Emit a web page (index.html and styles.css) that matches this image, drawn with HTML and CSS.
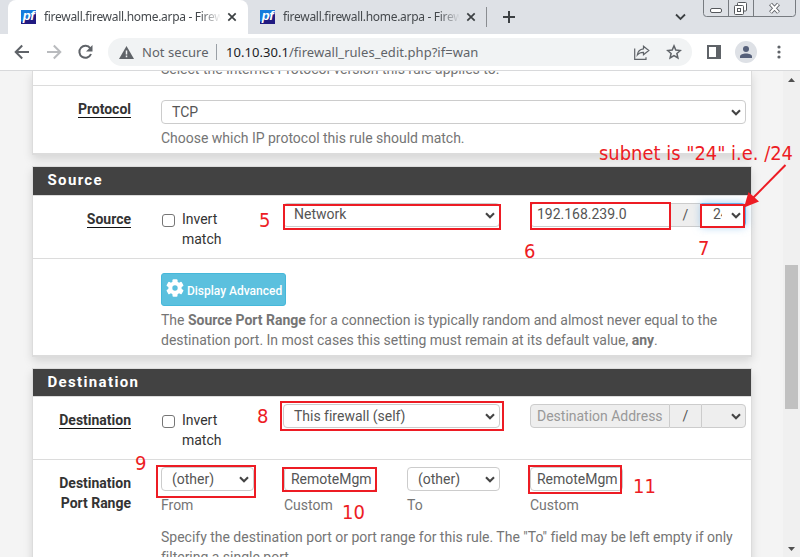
FILE: index.html
```html
<!DOCTYPE html>
<html lang="en">
<head>
<meta charset="utf-8">
<title>firewall.firewall.home.arpa - Firewall: Rules: Edit</title>
<link rel="stylesheet" href="styles.css">
</head>
<body>
<svg class="defs" width="0" height="0">
  <defs>
    <symbol id="close" viewBox="0 0 10 10"><path d="M1.3 1.3l7.4 7.4M8.7 1.3L1.3 8.7" stroke="#3c4043" stroke-width="1.7" fill="none"/></symbol>
    <symbol id="chev" viewBox="0 0 10 7"><path d="M1 1.2l4 4 4-4" stroke="currentColor" stroke-width="2.1" fill="none"/></symbol>
  </defs>
</svg>
<div class="browser">
  <header class="tabs">
    <div class="tab active">
      <span class="fav">pf</span><span class="title">firewall.firewall.home.arpa - Firew</span><svg class="x" width="10" height="10"><use href="#close"/></svg>
    </div>
    <div class="tab">
      <span class="fav">pf</span><span class="title">firewall.firewall.home.arpa - Firew</span><svg class="x" width="10" height="10"><use href="#close"/></svg>
    </div>
    <i class="tabsep"></i>
    <svg class="plus" width="12" height="12"><path d="M6 0v12M0 6h12" stroke="#3c4043" stroke-width="2"/></svg>
    <svg class="down" width="11" height="8"><path d="M1 1.5l4.500 4.500L10 1.5" stroke="#3c4043" stroke-width="1.8" fill="none"/></svg>
    <svg class="wincontrols" width="93" height="17" fill="none" stroke="#777b80">
      <path d="M.5 0v13.500q0 3 3 3h86q3 0 3-3V0M25.500 0v16M50.500 0v16"/>
      <rect x="7.500" y="8.500" width="11" height="4" rx="1.500" fill="#fff" stroke="#55585c"/>
      <g fill="#fff" stroke="#55585c"><rect x="34.500" y="2.500" width="9" height="8.500" rx="1"/><rect x="31.500" y="5.500" width="9" height="9" rx="1"/><rect x="34.500" y="8.500" width="3" height="3"/></g>
      <path d="M67.500 4l8 8.500M75.500 4l-8 8.500" stroke="#606368" stroke-width="4"/>
      <path d="M67.800 4.300l7.400 8M75.200 4.300l-7.400 8" stroke="#fff" stroke-width="2"/>
    </svg>
  </header>
  <div class="toolbar">
    <svg class="nav" width="94" height="28" fill="none" stroke="#5f6368" stroke-width="2">
      <path d="M15 14H2M8.200 7.500L1.700 14l6.500 6.500"/>
      <path d="M33 14h13M39.800 7.500l6.500 6.500-6.500 6.500" stroke="#b9bbbe"/>
      <path d="M76.300 10.300A6 6 0 1 0 77 16"/><path d="M78.500 7v6.500H72z" fill="#5f6368" stroke="none"/>
    </svg>
    <div class="omnibox">
      <svg width="15" height="13" class="warn"><path d="M7.500 0L15 13H0z" fill="#5f6368"/><path d="M7.500 4.500v4M7.500 9.500v1.700" stroke="#f1f3f4" stroke-width="1.500"/></svg>
      <span class="ns">Not secure</span><i class="urlsep"></i>
      <span class="url"><b>10.10.30.1</b>/firewall_rules_edit.php?if=wan</span>
      <svg class="share" width="16" height="15" fill="none" stroke="#5f6368" stroke-width="1.200"><path d="M.7 3.500v10.800H12v-2M9.500 1.200L14.800 5.500l-5.300 4.200V7.300Q5.500 7.200 3.300 10Q4 4.300 9.500 3.800z"/></svg>
      <svg class="star" width="16" height="16" fill="none" stroke="#5f6368" stroke-width="1.500"><path d="M8 1.900l1.800 4.200 4.600.4-3.500 3 1 4.500L8 11.600 4.100 14l1-4.500-3.500-3 4.600-.4z"/></svg>
    </div>
    <svg class="side" width="14" height="14"><path d="M0 0h14v14H0zM2 2v10h7V2z" fill="#5f6368" fill-rule="evenodd"/></svg>
    <svg class="avatar" width="22" height="22"><circle cx="11" cy="11" r="11" fill="#dee1e6"/><circle cx="11" cy="8" r="3" fill="#56607a"/><path d="M5 17v-1.500c0-2 3-3 6-3s6 1 6 3V17z" fill="#56607a"/></svg>
    <svg class="dots" width="4" height="14" fill="#5f6368"><circle cx="2" cy="2" r="1.600"/><circle cx="2" cy="7" r="1.600"/><circle cx="2" cy="12" r="1.600"/></svg>
  </div>
  <div class="page">
    <main>
      <section class="panel first">
        <div class="row cut"><div class="help">Select the Internet Protocol version this rule applies to.</div></div>
        <div class="row r-protocol">
          <div class="label"><span class="req">Protocol</span></div>
          <div class="content">
            <div class="field sel">TCP<svg class="chev" width="10" height="7"><use href="#chev"/></svg></div>
            <div class="help">Choose which IP protocol this rule should match.</div>
          </div>
        </div>
      </section>
      <section class="panel source">
        <h2>Source</h2>
        <div class="row r-addr">
          <div class="label"><span class="req">Source</span></div>
          <div class="content address">
            <div class="check"><i></i><span>Invert match</span></div>
            <div class="field sel">Network<svg class="chev" width="10" height="7"><use href="#chev"/></svg></div>
            <div class="group">
              <div class="field addr">192.168.239.0</div><div class="slash">/</div>
              <div class="field sel mask focus"><span class="clip">24</span><svg class="chev" width="10" height="7"><use href="#chev"/></svg></div>
            </div>
          </div>
        </div>
        <div class="row r-adv">
          <div class="label"></div>
          <div class="content">
            <div class="btn"><svg width="18" height="18" viewBox="-9 -9 18 18"><g fill="#fff"><rect x="-2.500" y="-8.700" width="5" height="17.400" rx="1"/><rect x="-2.500" y="-8.700" width="5" height="17.400" rx="1" transform="rotate(60)"/><rect x="-2.500" y="-8.700" width="5" height="17.400" rx="1" transform="rotate(120)"/><circle r="6.700"/></g><circle r="2.700" fill="#5bc0de"/></svg><span>Display Advanced</span></div>
            <div class="help adv">The <b>Source Port Range</b> for a connection is typically random and almost never equal to the destination port. In most cases this setting must remain at its default value, <b>any</b>.</div>
          </div>
        </div>
      </section>
      <section class="panel dest">
        <h2>Destination</h2>
        <div class="row r-addr">
          <div class="label"><span class="req">Destination</span></div>
          <div class="content address">
            <div class="check"><i></i><span>Invert match</span></div>
            <div class="field sel">This firewall (self)<svg class="chev" width="10" height="7"><use href="#chev"/></svg></div>
            <div class="group">
              <div class="field addr disabled">Destination Address</div><div class="slash">/</div>
              <div class="field sel mask disabled"><svg class="chev" width="10" height="7"><use href="#chev"/></svg></div>
            </div>
          </div>
        </div>
        <div class="row r-port">
          <div class="label">Destination<br>Port Range</div>
          <div class="content">
            <div class="ports">
              <div><div class="field sel">(other)<svg class="chev" width="10" height="7"><use href="#chev"/></svg></div><div class="help">From</div></div>
              <div><div class="field text">RemoteMgm</div><div class="help">Custom</div></div>
              <div><div class="field sel">(other)<svg class="chev" width="10" height="7"><use href="#chev"/></svg></div><div class="help">To</div></div>
              <div><div class="field text">RemoteMgm</div><div class="help">Custom</div></div>
            </div>
            <div class="help spec">Specify the destination port or port range for this rule. The "To" field may be left empty if only filtering a single port.</div>
          </div>
        </div>
      </section>
    </main>
    <aside class="scroll">
      <svg width="7" height="4"><path d="M0 4L3.500 0 7 4z" fill="#505050"/></svg>
      <i></i>
      <svg width="7" height="4"><path d="M0 0l3.500 4L7 0z" fill="#505050"/></svg>
    </aside>
  </div>
</div>
<svg class="notes" width="800" height="557">
  <g fill="none" stroke="#ed1c24" stroke-width="2">
    <rect x="284" y="205" width="216" height="24"/>
    <rect x="531" y="203" width="139" height="26"/>
    <rect x="701" y="205" width="43" height="22"/>
    <rect x="281" y="402" width="222" height="28"/>
    <rect x="157" y="466" width="98" height="31"/>
    <rect x="283" y="468" width="93" height="23"/>
    <rect x="529" y="466" width="92" height="27"/>
    <path d="M785.500 165L752 199"/>
  </g>
  <path d="M744 207.500l4.500-15.500 10.500 9.500z" fill="#ed1c24"/>
  <g class="note">
    <text x="599" y="160" textLength="194" lengthAdjust="spacingAndGlyphs">subnet is "24" i.e. /24</text>
    <text x="259" y="227">5</text>
    <text x="524" y="258">6</text>
    <text x="698" y="255">7</text>
    <text x="257" y="423">8</text>
    <text x="135" y="470">9</text>
    <text x="342" y="519">10</text>
    <text x="633" y="493">11</text>
  </g>
</svg>
</body>
</html>
```
FILE: styles.css
```css
* { box-sizing: border-box; }
body { margin: 0; width: 800px; height: 557px; overflow: hidden; position: relative; font: 14px/20px Roboto, sans-serif; letter-spacing: -.01px; color: #333; background: #fff; }
svg { flex: none; display: block; }
.defs { position: absolute; }
.browser { display: flex; flex-direction: column; height: 557px; }

.tabs { height: 34px; flex: none; background: #dee1e6; display: flex; align-items: center; font: 12px/16px "Noto Sans", sans-serif; letter-spacing: -.3px; color: #45494d; }
.tab { display: flex; align-items: center; height: 34px; width: 240px; margin-left: 8px; padding-left: 13px; }
.tab.active { background: #fff; border-radius: 8px 8px 0 0; }
.tab + .tab { margin-left: 0; padding-left: 12px; width: 230px; }
.fav { width: 15px; height: 14px; margin-right: 8px; flex: none; background: linear-gradient(150deg, #167bdc 50%, #211b82 55%); color: #fff; font: italic bold 13px/12px "Liberation Sans", sans-serif; text-align: center; letter-spacing: -.5px; overflow: hidden; }
.title { width: 177px; overflow: hidden; white-space: nowrap; -webkit-mask: linear-gradient(90deg, #000 88%, transparent 100%); mask: linear-gradient(90deg, #000 88%, transparent 100%); }
.tab .x { margin-left: 6px; }
.tabsep { width: 1px; height: 20px; margin-left: 8px; background: #8a8d91; }
.plus { margin-left: 16px; }
.down { margin-left: auto; margin-right: 17px; }
.wincontrols { align-self: flex-start; margin-right: 4px; }

.toolbar { height: 37px; flex: none; background: #fff; border-bottom: 1px solid #d8d9db; display: flex; align-items: center; padding-left: 14px; }
.omnibox { width: 584px; height: 28px; flex: none; border-radius: 14px; background: #f1f3f4; display: flex; align-items: center; padding-left: 11px; font: 13px/20px "Noto Sans", sans-serif; color: #5f6368; letter-spacing: 0; }
.warn { margin-right: 8px; }
.ns { width: 74px; letter-spacing: .05px; white-space: nowrap; }
.urlsep { width: 1px; height: 16px; background: #9aa0a6; margin-right: 9px; }
.url { letter-spacing: .04px; white-space: nowrap; }
.url b { font-weight: 400; color: #202124; }
.share { margin-left: auto; margin-right: 16px; }
.star { margin-right: 10px; }
.side { margin-left: 15px; }
.avatar { margin-left: 14px; }
.dots { margin-left: 20px; }

.page { flex: 1; min-height: 0; overflow: hidden; display: flex; justify-content: space-between; background: #f4f4f4; }
main { width: 720px; margin-left: 32px; }
.panel { background: #fff; border: 1px solid #dcdcdc; box-shadow: 0 4px 9px rgba(0,0,0,.13); margin-bottom: 11px; }
.panel.first { border-top: 0; height: 84px; border-bottom-width: 2px; }
.panel.source { height: 191px; border-bottom-width: 2px; }
.panel.dest { height: 240px; }
h2 { margin: 0; height: 28px; background: #424242; color: #fff; font: 700 15px/27px Roboto, sans-serif; letter-spacing: 1.35px; padding-left: 14.5px; }
.dest h2 { height: 27px; }
.row { display: grid; grid-template-columns: 98px 585px; column-gap: 30px; }
.row + .row, h2 + .row { border-top: 1px solid #dcdcdc; }
.cut { height: 14px; overflow: hidden; }
.cut .help { grid-column: 2; margin-top: -12px; }
.label { text-align: right; font-weight: 700; }
.req { border-bottom: 1px solid #111; }
.help { color: #757575; }
.field { position: relative; height: 24px; border: 1px solid #ccc; border-radius: 4px; background: #fff; color: #555; line-height: 22px; padding-left: 10px; white-space: nowrap; }
.source .field { line-height: 20px; }
.field .chev { position: absolute; right: 4px; top: 8px; color: #444; }
.r-protocol .label { padding-top: 13px; }
.r-protocol .content { padding-top: 14px; }
.r-protocol .help { margin-top: 4px; }
.r-addr { height: 63px; }
.r-addr .label { padding-top: 13px; }
.address { display: grid; grid-template-columns: 92px 217px 216px; column-gap: 30px; padding-top: 7px; }
.check { display: flex; padding-top: 6px; }
.check i { width: 13px; height: 13px; flex: none; border: 1px solid #767676; border-radius: 3px; margin: 5px 7px 0 1px; }
.check span { width: 50px; }
.group { display: flex; }
.field.addr { width: 140px; padding-left: 6px; border-radius: 4px 0 0 4px; }
.slash { width: 31px; height: 24px; line-height: 22px; text-align: center; background: #eee; border: solid #ccc; border-width: 1px 0; color: #555; }
.mask { width: 45px; border-radius: 0 4px 4px 0; }
.clip { display: block; width: 9px; overflow: hidden; margin-left: 1px; }
.focus { border-color: #66afe9; box-shadow: 0 0 8px rgba(102,175,233,.6); }
.disabled { background: #eee; color: #999; }
.r-adv .content { padding-top: 14px; }
.btn { width: 125px; height: 33px; display: flex; align-items: center; gap: 3px; padding-left: 4px; border: 1px solid #46b8da; border-radius: 3px; background: #5bc0de; color: #fff; font-size: 12px; font-weight: 500; white-space: nowrap; }
.btn svg { margin-top: -3px; }
.btn span { padding-top: 3px; }
.adv { margin-top: 4px; }
.r-port .label { padding-top: 13px; }
.r-port .content { padding-top: 7px; }
.ports { display: grid; grid-template-columns: repeat(4, 93px); column-gap: 30px; }
.ports .text { padding-left: 6px; }
.ports .help { margin-top: 4px; }
.spec { margin-top: 12px; }

.scroll { width: 17px; background: #f0f0f0; display: flex; flex-direction: column; align-items: center; padding-top: 7px; }
.scroll i { width: 13px; height: 144px; margin: 183px 0 138px; background: #c1c1c1; }
.notes { position: absolute; left: 0; top: 0; }
.note { fill: #ed1c24; font: 20px "DejaVu Sans Condensed", "DejaVu Sans", sans-serif; font-stretch: condensed; letter-spacing: 0; }
```
